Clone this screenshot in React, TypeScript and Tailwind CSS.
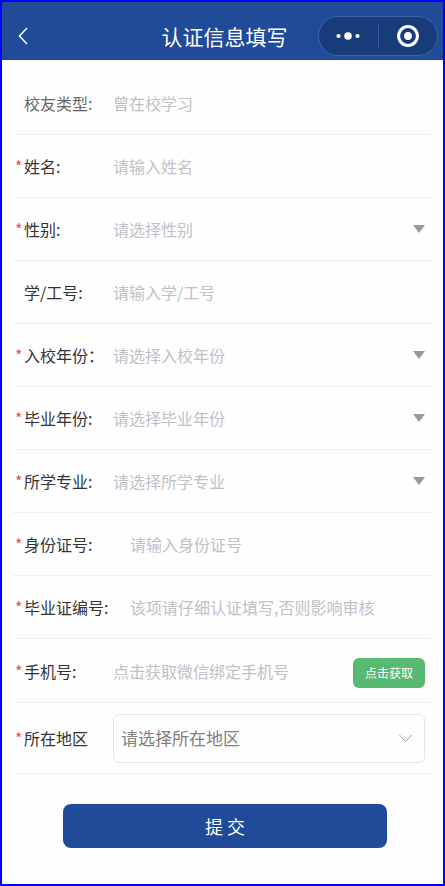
import React, { useState } from 'react';

/**
 * Alumni verification form, shown inside a mini-program shell
 * (blue title bar with the capsule menu on the right).
 */

interface Field {
  id: string;
  label: string;
  placeholder: string;
  kind: 'text' | 'select' | 'phone';
  required?: boolean;
  wideLabel?: boolean;
  readOnly?: boolean;
  options?: string[];
}

const YEARS = ['2020', '2021', '2022', '2023', '2024'];

const FIELDS: Field[] = [
  { id: 'type', label: '校友类型:', placeholder: '曾在校学习', kind: 'text', readOnly: true },
  { id: 'name', label: '姓名:', placeholder: '请输入姓名', kind: 'text', required: true },
  { id: 'gender', label: '性别:', placeholder: '请选择性别', kind: 'select', required: true, options: ['男', '女'] },
  { id: 'number', label: '学/工号:', placeholder: '请输入学/工号', kind: 'text' },
  { id: 'entry', label: '入校年份：', placeholder: '请选择入校年份', kind: 'select', required: true, options: YEARS },
  { id: 'graduation', label: '毕业年份:', placeholder: '请选择毕业年份', kind: 'select', required: true, options: YEARS },
  { id: 'major', label: '所学专业:', placeholder: '请选择所学专业', kind: 'select', required: true, options: [] },
  { id: 'idcard', label: '身份证号:', placeholder: '请输入身份证号', kind: 'text', required: true, wideLabel: true },
  { id: 'diploma', label: '毕业证编号:', placeholder: '该项请仔细认证填写,否则影响审核', kind: 'text', required: true, wideLabel: true },
  { id: 'phone', label: '手机号:', placeholder: '点击获取微信绑定手机号', kind: 'phone', required: true },
];

const FieldLabel: React.FC<{ id: string; text: string; required?: boolean; wide?: boolean; muted?: boolean }> = ({ id, text, required, wide, muted }) => (
  <label
    htmlFor={id}
    className={`flex shrink-0 items-center whitespace-nowrap ${wide ? 'w-[117px]' : 'w-[100px]'} ${muted ? 'text-[#666666]' : 'text-[#333333]'}`}
  >
    <span className="w-[11px] pl-[2px] text-[#e0525a]">{required ? '*' : ''}</span>
    {text}
  </label>
);

const TitleBar: React.FC = () => (
  <header className="grid h-[58px] grid-cols-[1fr_auto_1fr] items-center bg-[#204b98] pt-[10px] pr-[5px] pl-[9px] text-white">
    <button type="button" aria-label="返回" className="flex h-8 w-6 items-center justify-center">
      <svg width="10" height="18" viewBox="0 0 10 18" fill="none" stroke="currentColor" strokeWidth="1.5">
        <path d="M9 1L1.5 9L9 17" />
      </svg>
    </button>
    <h1 className="text-[21px] leading-8">认证信息填写</h1>
    <div className="flex h-10 w-[120px] items-center justify-self-end rounded-full border border-[#3a62a6] bg-[#183c78]">
      <button type="button" aria-label="更多" className="flex h-full flex-1 items-center justify-center">
        <svg width="24" height="8" viewBox="0 0 24 8" fill="currentColor">
          <circle cx="2.5" cy="4" r="2.1" />
          <circle cx="12" cy="4" r="3.8" />
          <circle cx="21.5" cy="4" r="2.1" />
        </svg>
      </button>
      <span className="h-6 w-px bg-[#345a9a]" />
      <button type="button" aria-label="关闭" className="flex h-full flex-1 items-center justify-center">
        <svg width="24" height="24" viewBox="0 0 24 24">
          <circle cx="12" cy="12" r="9.4" fill="none" stroke="currentColor" strokeWidth="3" />
          <circle cx="12" cy="12" r="3.9" fill="currentColor" />
        </svg>
      </button>
    </div>
  </header>
);

const App: React.FC = () => {
  const [values, setValues] = useState<Record<string, string>>({});

  const update = (id: string, value: string) => setValues((v) => ({ ...v, [id]: value }));

  return (
    <div className="min-h-screen border-2 border-[#0000ff] bg-[#fefefe] font-['Noto_Sans_CJK_SC','Noto_Sans',sans-serif] text-base">
      <TitleBar />

      <form className="pt-3 pr-[9px] pb-9 pl-[11px]" onSubmit={(e) => e.preventDefault()}>
        {FIELDS.map((f) => (
          <div
            key={f.id}
            className={`flex items-center border-b border-[#f0f0f2] pr-[9px] ${f.kind === 'phone' ? 'h-16' : 'h-[63px]'}`}
          >
            <FieldLabel id={f.id} text={f.label} required={f.required} wide={f.wideLabel} muted={f.readOnly} />

            {f.kind === 'select' ? (
              <div className="relative min-w-0 flex-1">
                <select
                  id={f.id}
                  value={values[f.id] ?? ''}
                  onChange={(e) => update(f.id, e.target.value)}
                  className={`w-full appearance-none bg-transparent outline-none ${values[f.id] ? 'text-[#333333]' : 'text-[#c0c0c6]'}`}
                >
                  <option value="">{f.placeholder}</option>
                  {f.options?.map((o) => (
                    <option key={o} value={o}>{o}</option>
                  ))}
                </select>
                <svg className="pointer-events-none absolute top-2 right-0" width="12" height="8" viewBox="0 0 12 8" fill="#999999">
                  <path d="M0 0H12L6 8Z" />
                </svg>
              </div>
            ) : (
              <input
                id={f.id}
                type="text"
                readOnly={f.readOnly}
                value={values[f.id] ?? ''}
                onChange={(e) => update(f.id, e.target.value)}
                placeholder={f.placeholder}
                className="min-w-0 flex-1 bg-transparent text-[#333333] outline-none placeholder:text-[#c0c0c6]"
              />
            )}

            {f.kind === 'phone' && (
              <button type="button" className="mt-1 h-[30px] w-[72px] shrink-0 rounded-md bg-[#58b972] text-xs text-white">
                点击获取
              </button>
            )}
          </div>
        ))}

        {/* Region */}
        <div className="flex h-[71px] items-center border-b border-[#f0f0f2] pr-[9px]">
          <FieldLabel id="region" text="所在地区" required />
          <div className="relative min-w-0 flex-1">
            <select
              id="region"
              value={values.region ?? ''}
              onChange={(e) => update('region', e.target.value)}
              className="h-[49px] w-full appearance-none rounded-md border border-[#e4e4e6] bg-transparent px-[7px] text-[17px] text-[#808080] outline-none"
            >
              <option value="">请选择所在地区</option>
            </select>
            <svg className="pointer-events-none absolute top-5 right-[13px]" width="13" height="9" viewBox="0 0 13 9" fill="none" stroke="#999999">
              <path d="M0.5 1L6.5 7.5L12.5 1" />
            </svg>
          </div>
        </div>

        <div className="pt-[30px] pr-[47px] pl-[50px]">
          <button type="submit" className="h-11 w-full rounded-lg bg-[#204b98] text-lg text-white">
            提 交
          </button>
        </div>
      </form>
    </div>
  );
};

export default App;
